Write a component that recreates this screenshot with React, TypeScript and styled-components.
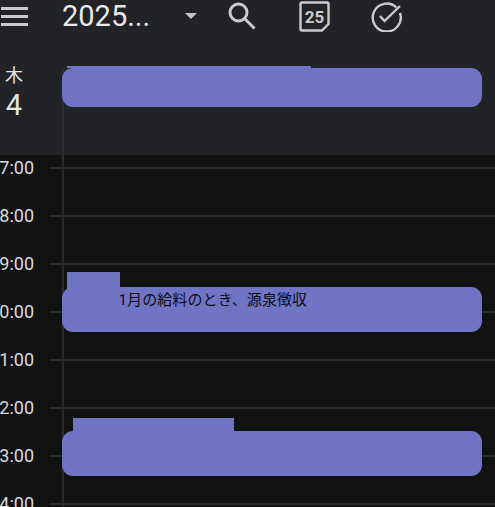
import styled, { createGlobalStyle } from 'styled-components';

const HOURS = ['07:00', '08:00', '09:00', '10:00', '11:00', '12:00', '13:00', '14:00'];

const TIMED_EVENTS = [
  { top: 132, patchLeft: 5, patchWidth: 53, patchHeight: 15, title: '01月の給料のとき、源泉徴収' },
  { top: 276, patchLeft: 11, patchWidth: 161, patchHeight: 13, title: '' }
];

const GlobalStyle = createGlobalStyle`
  html, body {
    margin: 0;
    padding: 0;
    background: #121212;
  }
  body {
    font-family: 'Roboto', 'Noto Sans CJK JP', sans-serif;
  }
`;

const App = () => {
  return (
    <>
      <GlobalStyle />
      <Page>
        <DayLine />
        <Header>
          <Toolbar>
            <MenuButton>
              <span />
              <span />
              <span />
            </MenuButton>
            <Title>2025...</Title>
            <Caret />
            <IconSlot $width={71}>
              <svg width="28" height="28" viewBox="0 0 28 28" fill="none" stroke="#cbcbcb" strokeWidth="3">
                <circle cx="10.5" cy="10.5" r="8.5" />
                <path d="M16.5 16.5L26.5 26.5" />
              </svg>
            </IconSlot>
            <IconSlot $width={72}>
              <svg width="31" height="31" viewBox="0 0 31 31" fill="none" stroke="#cbcbcb" strokeWidth="2.4">
                <path d="M3 1.5H28C29 1.5 29.5 2 29.5 3V23L23 29.5H3C2 29.5 1.5 29 1.5 28V3C1.5 2 2 1.5 3 1.5Z" />
                <text x="15.5" y="22" textAnchor="middle" fontFamily="Roboto, sans-serif" fontWeight="700" fontSize="17" fill="#cbcbcb" stroke="none">25</text>
              </svg>
            </IconSlot>
            <IconSlot $width={30}>
              <svg width="31" height="31" viewBox="0 0 31 31" fill="none" stroke="#cbcbcb" strokeWidth="2.4">
                <path d="M25.5 6.5A14 14 0 1 0 29 12" />
                <path d="M9 15L13.5 20L29 5" />
              </svg>
            </IconSlot>
          </Toolbar>
          <AllDayRow>
            <DayColumn>
              <Weekday>木</Weekday>
              <DayNumber>4</DayNumber>
            </DayColumn>
            <Event $height={39}>
              <Patch $left={5} $top={-2} $width={244} $height={2} />
            </Event>
          </AllDayRow>
        </Header>
        <Schedule>
          <Hours>
            {HOURS.map((hour) => (
              <HourRow key={hour}>
                <HourGutter>
                  <HourLabel>{hour}</HourLabel>
                </HourGutter>
                <HourLine />
              </HourRow>
            ))}
          </Hours>
          {TIMED_EVENTS.map((item) => (
            <TimedEvent key={item.top} $top={item.top}>
              <Event $height={45}>
                <EventTitle>{item.title}</EventTitle>
                <Patch
                  $left={item.patchLeft}
                  $top={-item.patchHeight}
                  $width={item.patchWidth}
                  $height={item.patchHeight + 24}
                />
              </Event>
            </TimedEvent>
          ))}
        </Schedule>
      </Page>
    </>
  );
};

export default App;

const Page = styled.div`
  position: relative;
  width: 495px;
  height: 507px;
  overflow: hidden;
  background: #121212;
`;

const DayLine = styled.div`
  position: absolute;
  left: 62px;
  top: 68px;
  bottom: 0;
  width: 2px;
  background: #2b2c2f;
  z-index: 1;
`;

const Header = styled.header`
  height: 155px;
  background: #212327;
`;

const Toolbar = styled.div`
  display: flex;
  align-items: center;
  height: 32px;
  padding-left: 1px;
`;

const MenuButton = styled.div`
  display: flex;
  flex-direction: column;
  gap: 5px;
  width: 27px;
  margin-right: 34px;
  > span {
    display: block;
    height: 3px;
    background: #cbcbcb;
  }
`;

const Title = styled.div`
  width: 123px;
  font-size: 29px;
  line-height: 32px;
  color: #e8e8e8;
`;

const Caret = styled.div`
  width: 0;
  height: 0;
  margin-right: 31px;
  border-left: 6px solid transparent;
  border-right: 6px solid transparent;
  border-top: 6px solid #c4c4c4;
`;

const IconSlot = styled.div<{ $width: number }>`
  display: flex;
  width: ${(p) => p.$width}px;
  > svg {
    flex-shrink: 0;
  }
`;

const AllDayRow = styled.div`
  display: flex;
  padding: 36px 13px 0 0;
`;

const DayColumn = styled.div`
  display: flex;
  flex-direction: column;
  align-items: center;
  width: 28px;
  margin-right: 34px;
  color: #e3e3e3;
`;

const Weekday = styled.div`
  font-size: 18px;
  line-height: 20px;
  margin-top: -2px;
`;

const DayNumber = styled.div`
  font-size: 29px;
  line-height: 32px;
  margin-top: 3px;
`;

const Schedule = styled.main`
  position: relative;
  height: 352px;
  overflow: hidden;
`;

const Hours = styled.div`
  margin-top: -11px;
`;

const HourRow = styled.div`
  display: flex;
  align-items: center;
  height: 48px;
`;

const HourGutter = styled.div`
  display: flex;
  justify-content: flex-end;
  flex-shrink: 0;
  width: 34px;
  margin-right: 16px;
  overflow: hidden;
`;

const HourLabel = styled.span`
  font-size: 18px;
  line-height: 24px;
  color: #d8d8d8;
`;

const HourLine = styled.div`
  flex: 1;
  height: 2px;
  background: #2a2b2d;
`;

const TimedEvent = styled.div<{ $top: number }>`
  position: absolute;
  z-index: 3;
  top: ${(p) => p.$top}px;
  left: 62px;
  right: 13px;
`;

const Event = styled.div<{ $height: number }>`
  position: relative;
  z-index: 3;
  flex: 1;
  height: ${(p) => p.$height}px;
  border-radius: 11px;
  background: #7074c4;
`;

const EventTitle = styled.div`
  padding: 3px 0 0 48px;
  font-family: 'Roboto', 'Noto Sans CJK JP', sans-serif;
  font-size: 15px;
  line-height: 20px;
  letter-spacing: 0.1px;
  color: #0c0c12;
`;

const Patch = styled.div<{ $left: number; $top: number; $width: number; $height: number }>`
  position: absolute;
  left: ${(p) => p.$left}px;
  top: ${(p) => p.$top}px;
  width: ${(p) => p.$width}px;
  height: ${(p) => p.$height}px;
  background: #7074c4;
`;
